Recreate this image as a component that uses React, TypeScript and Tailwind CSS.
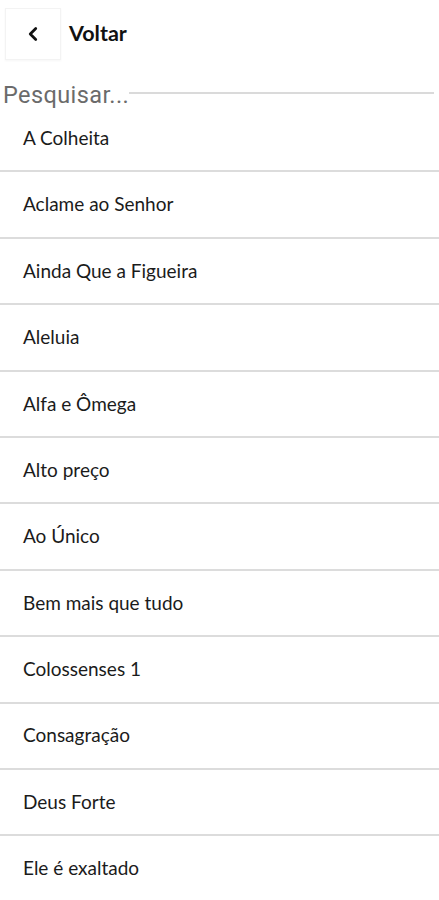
import { ChevronLeft } from 'lucide-react'

const songs = [
  'A Colheita',
  'Aclame ao Senhor',
  'Ainda Que a Figueira',
  'Aleluia',
  'Alfa e Ômega',
  'Alto preço',
  'Ao Único',
  'Bem mais que tudo',
  'Colossenses 1',
  'Consagração',
  'Deus Forte',
  'Ele é exaltado',
]

export default function App() {
  return (
    <div className="w-[439px] h-[900px] overflow-hidden bg-white font-['Lato',sans-serif] text-[#1b1b1b]">
      <div className="flex items-center h-[66px] pl-[5px] pt-[1px]">
        <button className="w-[56px] h-[52px] flex items-center justify-center bg-white border border-[#f3f3f3] shadow-[0_1px_2px_rgba(0,0,0,0.04)]">
          <ChevronLeft size={22} strokeWidth={3} className="text-[#111]" />
        </button>
        <span className="ml-[8px] text-[21.5px] font-bold text-[#111]">Voltar</span>
      </div>
      <div className="flex items-end h-[40px] pl-[3px] pr-[5px]">
        <span className="font-['Roboto',sans-serif] text-[23.5px] tracking-[0.4px] leading-[28px] text-[#6b6b6b] relative top-[3px]">
          Pesquisar...
        </span>
        <div className="flex-1 h-[2px] bg-[#dadada] mb-[12px]" />
      </div>
      <ul>
        {songs.map((s) => (
          <li
            key={s}
            className="h-[66.4px] flex items-center pl-[23px] border-b-2 border-[#dcdcdc] text-[19px]"
          >
            {s}
          </li>
        ))}
      </ul>
    </div>
  )
}
